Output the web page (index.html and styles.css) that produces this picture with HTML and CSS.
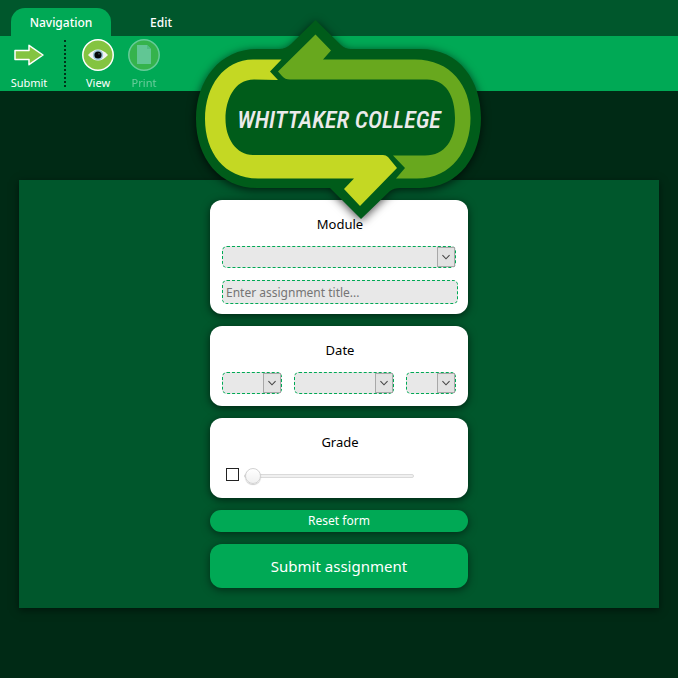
FILE: index.html
```html
<!DOCTYPE html>
<html lang="en">
<head>
<meta charset="utf-8">
<title>Whittaker College</title>
<link rel="stylesheet" href="styles.css">
</head>
<body>
<header class="header">
  <nav class="tabs">
    <a class="tab tab-active" href="#navigation">Navigation</a>
    <a class="tab" href="#edit">Edit</a>
  </nav>
  <div class="toolbar">
    <button class="tool" type="button">
      <svg class="tool-icon" viewBox="0 0 32 32"><path d="M2 11.500h14V6.300L30 16 16 25.700v-5.200H2z" fill="#84c441" stroke="#fff" stroke-width="1.500" stroke-linejoin="round"/></svg>
      Submit
    </button>
    <span class="divider"></span>
    <button class="tool" type="button">
      <svg class="tool-icon" viewBox="0 0 32 32"><circle cx="16" cy="16" r="15.200" fill="#84c441" stroke="#fff" stroke-width="1.500"/><path d="M6 16Q11 10.500 16 10.500T26 16Q21 21.500 16 21.500T6 16z" fill="#f4f4f4"/><circle cx="16" cy="16" r="5.200" fill="#9cc7d8"/><circle cx="16" cy="16" r="3.600" fill="#05080a"/><circle cx="17" cy="14.800" r=".6" fill="#7f9ca8"/></svg>
      View
    </button>
    <button class="tool tool-print" type="button" disabled>
      <svg class="tool-icon" viewBox="0 0 32 32"><circle cx="16" cy="16" r="15.200" fill="#84c441" stroke="#fff" stroke-width="1.500"/><path d="M9 6h10l4 4v15H9z" fill="#f2f2f2"/><path d="M19 6v4h4" fill="#c5ddc8"/></svg>
      Print
    </button>
  </div>
</header>

<div class="logo">
  <svg class="logo-art" viewBox="186 10 306 222" aria-hidden="true">
    <path d="M257 49H279Q286 49 291 44L315.500 20 341 45Q345 49 351 49H420C460 49 481 81 481 118S460 188 420 188H400Q394 188 390 191L361 219 330 188H257C220 188 196 158 196 119S220 49 257 49z" fill="#005c1a"/>
    <path d="M281.500 59.500H253C224 59.500 205 86 205 119S224 178.500 258 178.500H354L344 189 360 206 397 168 388 157Q386 155 383 155H253C236 155 225.500 138 225.500 119S234 79.500 254 79.500L278 80 270 71.500z" fill="#c4d823"/>
    <path d="M315.500 34.500 331 50.500 323 59.500H415C451 59.500 470.500 86 470.500 118S452 178.500 417 178.500H396L405 168 393 155.500H425C445 155.500 455 140 455 118S446 79.500 427 79.500H290Q285 79.500 282 76L278 71.500z" fill="#68a81e"/>
  </svg>
  <h1 class="logo-name">WHITTAKER COLLEGE</h1>
</div>

<main class="panel">
  <form class="form">
    <section class="card">
      <label class="card-title" for="module">Module</label>
      <div class="select module">
        <select id="module"></select>
        <svg class="chevron" viewBox="0 0 18 20"><path d="M5 8l4 4 4-4" fill="none" stroke="#444" stroke-width="1.200"/></svg>
      </div>
      <input class="title-input" type="text" placeholder="Enter assignment title..." aria-label="Assignment title">
    </section>
    <section class="card">
      <h2 class="card-title">Date</h2>
      <div class="dates">
        <div class="select"><select aria-label="Day"></select><svg class="chevron" viewBox="0 0 18 20"><path d="M5 8l4 4 4-4" fill="none" stroke="#444" stroke-width="1.200"/></svg></div>
        <div class="select"><select aria-label="Month"></select><svg class="chevron" viewBox="0 0 18 20"><path d="M5 8l4 4 4-4" fill="none" stroke="#444" stroke-width="1.200"/></svg></div>
        <div class="select"><select aria-label="Year"></select><svg class="chevron" viewBox="0 0 18 20"><path d="M5 8l4 4 4-4" fill="none" stroke="#444" stroke-width="1.200"/></svg></div>
      </div>
    </section>
    <section class="card">
      <label class="card-title" for="grade">Grade</label>
      <div class="grade">
        <input class="check" type="checkbox" aria-label="Enable grade">
        <input class="slider" id="grade" type="range" min="0" max="100" value="0">
      </div>
    </section>
    <button class="button" type="reset">Reset form</button>
    <button class="button button-large" type="submit">Submit assignment</button>
  </form>
</main>
</body>
</html>
```
FILE: styles.css
```css
* { box-sizing: border-box; }

body {
  margin: 0;
  min-height: 100vh;
  background: #002a15;
  color: #000;
  font-family: "Noto Sans", "Open Sans", sans-serif;
  font-size: 12px;
  line-height: 16px;
}

button, input, select { font: inherit; margin: 0; }

.header { background: #00572c; padding-top: 8px; }

.tabs { display: flex; padding-left: 11px; }

.tab {
  width: 100px;
  height: 28px;
  border-radius: 14px 14px 0 0;
  color: #fff;
  font-size: 12px;
  font-weight: 500;
  line-height: 30px;
  text-align: center;
  text-decoration: none;
}

.tab-active { background: #00a955; }

.toolbar {
  display: flex;
  height: 55px;
  padding: 3px 6px;
  background: #00a955;
}

.tool {
  display: flex;
  flex-direction: column;
  align-items: center;
  gap: 3px;
  width: 46px;
  padding: 0;
  border: 0;
  background: none;
  color: #fff;
  font-size: 11px;
  line-height: 18px;
}

.tool-icon { flex: none; width: 32px; height: 32px; }
.tool-print { opacity: 0.4; }

.divider {
  height: 47px;
  margin: 1px 9px 0 12px;
  border-left: 2px dotted #00331a;
}

.logo {
  position: absolute;
  top: 10px;
  left: 50%;
  width: 306px;
  margin-left: -153px;
  z-index: 1;
  pointer-events: none;
}

.logo-art {
  display: block;
  overflow: visible;
  filter: drop-shadow(0 2px 5px rgba(0, 0, 0, 0.7));
}

.logo-name {
  position: absolute;
  top: 94px;
  left: 0;
  width: 100%;
  margin: 0;
  color: #ebebeb;
  font-family: "Roboto Condensed", "Liberation Sans Narrow", "Liberation Sans", sans-serif;
  font-size: 24px;
  font-style: italic;
  font-weight: 500;
  line-height: 32px;
  text-align: center;
  white-space: nowrap;
}

.panel {
  max-width: 640px;
  margin: 89px auto 0;
  padding: 20px;
  background: #00572c;
  box-shadow: 0 2px 8px rgba(0, 0, 0, 0.5);
}

.form {
  display: flex;
  flex-direction: column;
  gap: 12px;
  max-width: 258px;
  margin: 0 auto;
}

.card {
  display: flex;
  flex-direction: column;
  padding: 16px 10px 10px 12px;
  border-radius: 12px;
  background: #fff;
  box-shadow: 0 2px 8px rgba(0, 0, 0, 0.6);
}

.card-title {
  margin: 0 0 14px;
  font-size: 13px;
  font-weight: 400;
  line-height: 16px;
  text-align: center;
}

.select { position: relative; height: 22px; }
.module { margin: 0 2px 12px 0; }

.select select,
.title-input {
  display: block;
  width: 100%;
  height: 100%;
  border: 1px dashed #00a955;
  border-radius: 5px;
  background: #e8e8e8;
  appearance: none;
}

.chevron {
  position: absolute;
  top: 1px;
  right: 1px;
  width: 18px;
  height: 20px;
  border: 1px solid #a8a8a8;
  background: #e2e2e2;
  pointer-events: none;
}

.title-input {
  height: 24px;
  padding: 0 3px;
}

.title-input::placeholder { color: #757575; opacity: 1; }

.dates {
  display: grid;
  grid-template-columns: 60fr 100fr 50fr;
  gap: 12px;
  margin: 0 2px 2px 0;
}

.grade { display: flex; align-items: center; gap: 5px; height: 24px; padding-left: 4px; }

.check {
  width: 13px;
  height: 13px;
  margin-bottom: 4px;
  border: 1px solid #222;
  background: #fff;
  appearance: none;
}

.slider { width: 170px; height: 16px; background: none; appearance: none; }

.slider::-webkit-slider-runnable-track {
  height: 4px;
  border: 1px solid #dadada;
  border-radius: 2px;
  background: #f0f0f0;
}

.slider::-webkit-slider-thumb {
  width: 16px;
  height: 16px;
  margin-top: -7px;
  border: 1px solid #d2d2d2;
  border-radius: 50%;
  background: linear-gradient(#fff, #f0f0f0);
  box-shadow: 0 1px 1px rgba(0, 0, 0, 0.2);
  appearance: none;
}

.button {
  height: 22px;
  padding: 0;
  border: 0;
  border-radius: 12px;
  background: #00a955;
  color: #fff;
  box-shadow: 0 2px 8px rgba(0, 0, 0, 0.5);
}

.button-large { height: 44px; font-size: 15px; }
```
